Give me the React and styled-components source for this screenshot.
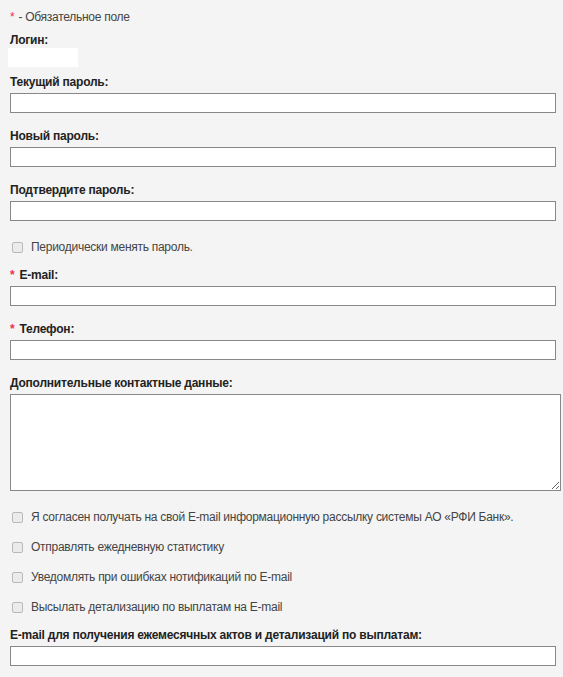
import React from "react";
import styled, { createGlobalStyle } from "styled-components";

const Global = createGlobalStyle`
  html, body {
    margin: 0;
    padding: 0;
    background: #f4f4f4;
  }
  body {
    font-family: "Liberation Sans", Arial, sans-serif;
    font-size: 12px;
    letter-spacing: -0.27px;
    color: #333;
  }
`;

const Form = styled.form`
  display: flex;
  flex-direction: column;
  padding: 10px 0 10px 10px;
  width: 563px;
  box-sizing: border-box;
`;

const Note = styled.div`
  line-height: 14px;
  color: #444;
`;

const Star = styled.span`
  color: #e8334a;
  margin-right: ${(p) => p.$gap || 4}px;
`;

const Field = styled.div`
  display: flex;
  flex-direction: column;
  margin-top: ${(p) => p.$mt ?? 16}px;
`;

const Label = styled.label`
  font-weight: bold;
  line-height: 14px;
  letter-spacing: -0.22px;
  color: #222;
  margin-bottom: ${(p) => p.$mb ?? 4}px;
`;

const LoginValue = styled.div`
  width: 70px;
  height: 19px;
  margin-left: -2px;
  background: #fff;
`;

const Input = styled.input`
  box-sizing: border-box;
  width: 546px;
  height: 20px;
  margin: 0;
  padding: 1px 3px;
  border: 1px solid #888;
  background: #fff;
  font: inherit;
  outline: none;
`;

const TextArea = styled.textarea`
  box-sizing: border-box;
  width: 551px;
  height: 97px;
  margin: 0;
  padding: 2px 3px;
  border: 1px solid #888;
  background: #fff;
  font: inherit;
  outline: none;
  resize: both;
`;

const CheckRow = styled.label`
  display: flex;
  align-items: center;
  height: 30px;
  margin-top: ${(p) => p.$mt ?? 0}px;
  color: #444;
  line-height: 14px;
`;

const Box = styled.input.attrs({ type: "checkbox" })`
  appearance: none;
  -webkit-appearance: none;
  box-sizing: border-box;
  width: 11px;
  height: 11px;
  margin: 0 8px 0 2px;
  border: 1px solid #b9b9b9;
  border-radius: 2px;
  background: #ebebeb;
  flex: none;
`;

const checks = [
  "Я согласен получать на свой E-mail информационную рассылку системы АО «РФИ Банк».",
  "Отправлять ежедневную статистику",
  "Уведомлять при ошибках нотификаций по E-mail",
  "Высылать детализацию по выплатам на E-mail",
];

export default function App() {
  return (
    <>
      <Global />
      <Form onSubmit={(e) => e.preventDefault()}>
        <Note>
          <Star>*</Star>- Обязательное поле
        </Note>
        <Field $mt={9}>
          <Label $mb={1}>Логин:</Label>
          <LoginValue />
        </Field>
        <Field $mt={8}>
          <Label>Текущий пароль:</Label>
          <Input type="password" />
        </Field>
        <Field>
          <Label>Новый пароль:</Label>
          <Input type="password" />
        </Field>
        <Field>
          <Label>Подтвердите пароль:</Label>
          <Input type="password" />
        </Field>
        <CheckRow $mt={11}>
          <Box />
          Периодически менять пароль.
        </CheckRow>
        <Field $mt={6}>
          <Label>
            <Star $gap={5}>*</Star>E-mail:
          </Label>
          <Input type="text" />
        </Field>
        <Field>
          <Label>
            <Star $gap={5}>*</Star>Телефон:
          </Label>
          <Input type="text" />
        </Field>
        <Field>
          <Label>Дополнительные контактные данные:</Label>
          <TextArea />
        </Field>
        <CheckRow $mt={11}>
          <Box />
          {checks[0]}
        </CheckRow>
        {checks.slice(1).map((t) => (
          <CheckRow key={t}>
            <Box />
            {t}
          </CheckRow>
        ))}
        <Field $mt={6}>
          <Label>E-mail для получения ежемесячных актов и детализаций по выплатам:</Label>
          <Input type="text" />
        </Field>
      </Form>
    </>
  );
}
